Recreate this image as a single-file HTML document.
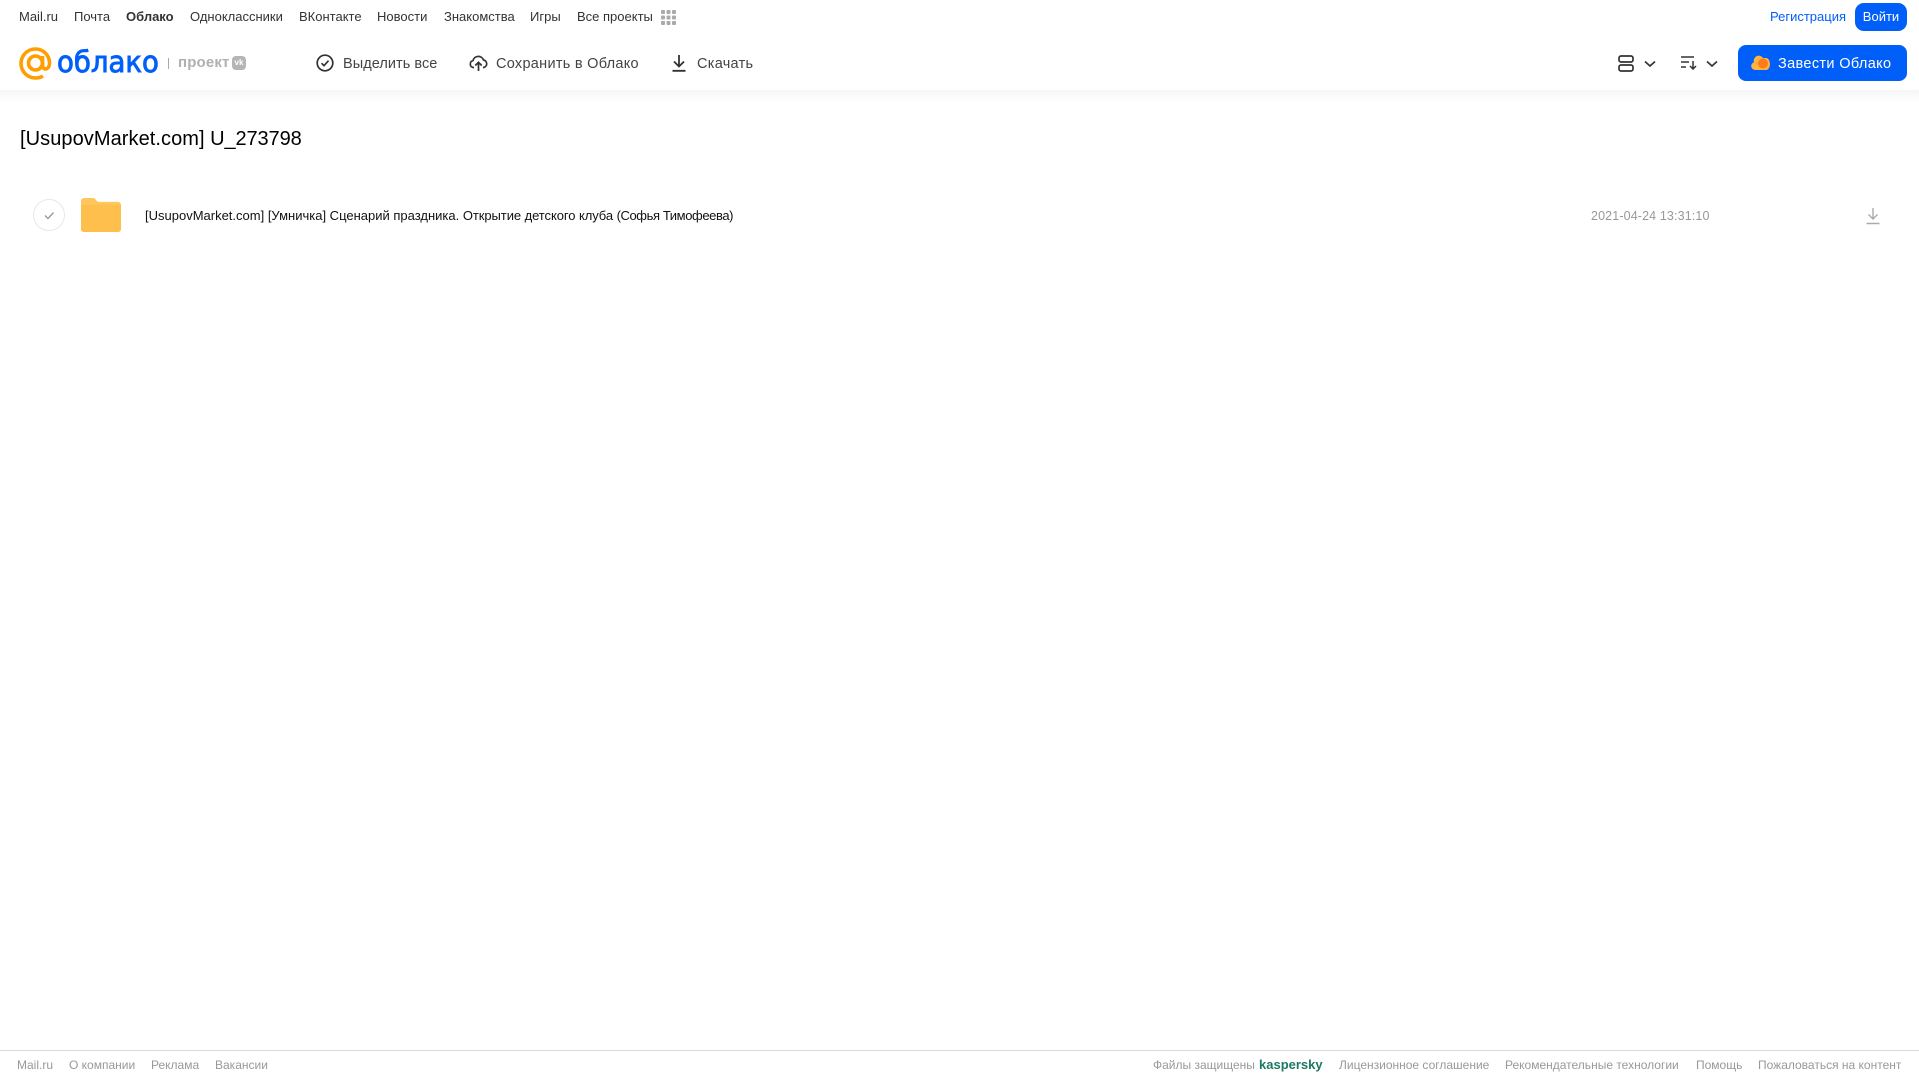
<!DOCTYPE html>
<html lang="ru"><head><meta charset="utf-8"><title>Облако</title>
<style>
html,body{margin:0;padding:0;background:#fff;}
body{width:1919px;height:1079px;position:relative;overflow:hidden;font-family:"Liberation Sans",Arial,sans-serif;}
.t{position:absolute;white-space:nowrap;line-height:20px;}
.n{top:7px;font-size:13px;color:#333;}
.a{top:53.500px;font-size:14.5px;color:#444;letter-spacing:.28px;}
.f{top:1055px;font-size:12px;color:#999;}
svg{position:absolute;display:block;}
#shadow{position:absolute;left:0;top:90px;width:1919px;height:12px;background:linear-gradient(#f6f6f6,#fff);}
</style></head><body>
<div id="shadow"></div>
<span class="t n" style="left:19px">Mail.ru</span>
<span class="t n" style="left:74px">Почта</span>
<span class="t n" style="left:126px;font-weight:bold">Облако</span>
<span class="t n" style="left:190px">Одноклассники</span>
<span class="t n" style="left:299px">ВКонтакте</span>
<span class="t n" style="left:377px">Новости</span>
<span class="t n" style="left:444px">Знакомства</span>
<span class="t n" style="left:530px">Игры</span>
<span class="t n" style="left:577px">Все проекты</span>
<svg style="left:661px;top:10px" width="15" height="15"><g fill="#aaa"><rect x="0" y="0" width="4" height="4" rx="1"/><rect x="5.500" y="0" width="4" height="4" rx="1"/><rect x="11" y="0" width="4" height="4" rx="1"/><rect x="0" y="5.500" width="4" height="4" rx="1"/><rect x="5.500" y="5.500" width="4" height="4" rx="1"/><rect x="11" y="5.500" width="4" height="4" rx="1"/><rect x="0" y="11" width="4" height="4" rx="1"/><rect x="5.500" y="11" width="4" height="4" rx="1"/><rect x="11" y="11" width="4" height="4" rx="1"/></g></svg>
<span class="t n" style="left:1770px;color:#005ff9">Регистрация</span>
<div style="position:absolute;left:1855px;top:3px;width:52px;height:28px;border-radius:9px;background:#005ff9;color:#fff;font-size:13px;line-height:28px;text-align:center;">Войти</div>

<svg style="left:19px;top:47px" width="33" height="33" viewBox="0 0 33 33"><g fill="none" stroke="#ff9e00" stroke-width="3.600"><circle cx="16.500" cy="16" r="7"/><path d="M23.500 9v9.500c0 5 7 5 7-2.500C30.500 8 24 2 16.500 2 8.500 2 2 8.500 2 16.500S8.500 31 16.500 31c3 0 5.500-.7 7.500-2"/></g></svg>
<span class="t" style="left:57px;top:44px;line-height:36px;font-size:29px;color:#005ff9;-webkit-text-stroke:.9px #005ff9;font-family:'DejaVu Sans',sans-serif;transform-origin:0 50%;transform:scaleX(.95)">облако</span>
<div style="position:absolute;left:168px;top:58px;width:1px;height:11px;background:#aaa"></div>
<span class="t" style="left:178px;top:53px;font-size:15px;font-weight:bold;color:#b0b0b0;letter-spacing:.15px">проект</span>
<div style="position:absolute;left:232px;top:56px;width:14px;height:14px;border-radius:4px;background:#b5b5b5;color:#fff;font-size:8px;font-weight:bold;line-height:14px;text-align:center">vk</div>

<svg style="left:316px;top:54px" width="18" height="18" viewBox="0 0 18 18" fill="none" stroke="#333" stroke-width="1.700"><circle cx="9" cy="9" r="7.800"/><path d="M5.500 9.200l2.500 2.500 4.500-5"/></svg>
<span class="t a" style="left:343px;letter-spacing:.05px">Выделить все</span>
<svg style="left:469px;top:54px" width="19" height="18" viewBox="0 0 19 18" fill="none" stroke="#333" stroke-width="1.700"><path d="M5 13.500H4.500A3.500 3.500 0 0 1 4 6.600 5.500 5.500 0 0 1 14.500 6a3.800 3.800 0 0 1 0 7.500H14"/><path d="M9.500 17V8.500M6.300 11.500l3.200-3.200 3.200 3.200"/></svg>
<span class="t a" style="left:496px">Сохранить в Облако</span>
<svg style="left:672px;top:54px" width="14" height="18" viewBox="0 0 14 18" fill="none" stroke="#333" stroke-width="1.800"><path d="M7 1v11M2 7.500l5 5 5-5M.5 16.800h13"/></svg>
<span class="t a" style="left:697px">Скачать</span>

<svg style="left:1618px;top:55px" width="16" height="17" viewBox="0 0 16 17" fill="none" stroke="#333" stroke-width="1.700"><rect x="1" y="1" width="14" height="6" rx="2"/><rect x="1" y="10" width="14" height="6" rx="2"/></svg>
<svg style="left:1644px;top:60px" width="12" height="8" viewBox="0 0 12 8" fill="none" stroke="#333" stroke-width="1.700"><path d="M1 1.500l5 4.500 5-4.500"/></svg>
<svg style="left:1681px;top:56px" width="16" height="14" viewBox="0 0 16 14" fill="none" stroke="#333" stroke-width="1.500"><path d="M0 1h13M0 6h8M0 11h5M12 5v8M9 10l3 3 3-3"/></svg>
<svg style="left:1706px;top:60px" width="12" height="8" viewBox="0 0 12 8" fill="none" stroke="#333" stroke-width="1.700"><path d="M1 1.500l5 4.500 5-4.500"/></svg>
<div style="position:absolute;left:1738px;top:45px;width:169px;height:36px;border-radius:8px;background:#005ff9"></div>
<svg style="left:1751px;top:54px" width="19" height="17" viewBox="0 0 19 17"><path d="M4 16a4 4 0 0 1-1-7.800A5 5 0 0 1 12 4h3a4 6 0 0 1 0 12z" fill="#ffb340"/><circle cx="12" cy="9.500" r="5" fill="#ff7a1a"/></svg>
<span class="t" style="left:1778px;top:53.500px;font-size:14.5px;color:#fff;letter-spacing:.35px">Завести Облако</span>

<span class="t" style="left:20px;top:126px;line-height:26px;font-size:20px;color:#000"><span style="letter-spacing:.07px">[UsupovMarket.com]</span><span style="letter-spacing:-.1px;word-spacing:0"> U_273798</span></span>

<svg style="left:33px;top:199px" width="32" height="32" viewBox="0 0 32 32" fill="none"><circle cx="16" cy="16" r="15.500" stroke="#e8e8e8"/><path d="M12 16.500l3 3 5.500-6" stroke="#999" stroke-width="1.300"/></svg>
<svg style="left:81px;top:198px" width="40" height="34" viewBox="0 0 40 35" preserveAspectRatio="none"><path d="M0 3a3 3 0 0 1 3-3h9c3 0 3 4 6 4h19a3 3 0 0 1 3 3v25a3 3 0 0 1-3 3H3a3 3 0 0 1-3-3z" fill="#ffc65c"/><path d="M0 8a1 1 0 0 1 1-1h38a1 1 0 0 1 1 1v24a3 3 0 0 1-3 3H3a3 3 0 0 1-3-3z" fill="#ffbf4d"/></svg>
<span class="t" style="left:145px;top:206px;font-size:13px;color:#111">[UsupovMarket.com] [Умничка] Сценарий праздника. <span style="letter-spacing:-.075px">Открытие детского клуба </span><span style="letter-spacing:-.4px">(Софья Тимофеева)</span></span>
<span class="t" style="left:1591px;top:206px;font-size:12.500px;color:#999;letter-spacing:.13px">2021-04-24 13:31:10</span>
<svg style="left:1866px;top:207px" width="14" height="18" viewBox="0 0 14 18" fill="none" stroke="#aaa" stroke-width="1.400"><path d="M7 1v11M2.500 7.500L7 12l4.500-4.500M.5 16.500h13"/></svg>

<div style="position:absolute;left:0;top:1050px;width:1919px;height:1px;background:#d9d9d9"></div>
<span class="t f" style="left:17px">Mail.ru</span>
<span class="t f" style="left:69px">О компании</span>
<span class="t f" style="left:151px">Реклама</span>
<span class="t f" style="left:215px">Вакансии</span>
<span class="t f" style="left:1153px">Файлы защищены</span>
<span class="t f" style="left:1259px;font-size:13px;font-weight:bold;color:#1a7a63">kaspersky</span>
<span class="t f" style="left:1339px">Лицензионное соглашение</span>
<span class="t f" style="left:1505px">Рекомендательные технологии</span>
<span class="t f" style="left:1696px">Помощь</span>
<span class="t f" style="left:1758px">Пожаловаться на контент</span>
</body></html>
